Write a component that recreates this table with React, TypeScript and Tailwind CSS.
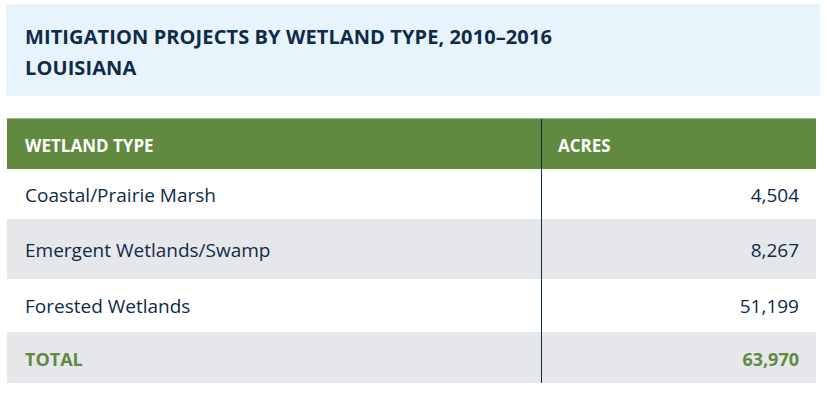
const rows = [
  { type: 'Coastal/Prairie Marsh', acres: '4,504', h: 'h-[50px]', bg: 'bg-white' },
  { type: 'Emergent Wetlands/Swamp', acres: '8,267', h: 'h-[60px]', bg: 'bg-[#e6e7eb]' },
  { type: 'Forested Wetlands', acres: '51,199', h: 'h-[53px]', bg: 'bg-white' },
];

export default function App() {
  return (
    <div className="w-[827px] h-[405px] bg-white pt-[4px] text-[#0e2b47] font-['Open_Sans',sans-serif]">
      {/* Title */}
      <div className="ml-[6px] w-[814px] h-[92px] bg-[#e8f4fc] pl-[19px] pt-[17px] font-bold text-[20px] leading-[31px] tracking-[0.1px]">
        <div>MITIGATION PROJECTS BY WETLAND TYPE, 2010–2016</div>
        <div>LOUISIANA</div>
      </div>

      {/* Table */}
      <div className="ml-[7px] mt-[22px] w-[809px]">
        <div className="flex h-[51px] bg-[#5f8a3f] border-t border-[#9db38c] text-white font-bold text-[17px]">
          <div className="w-[535px] flex items-center pl-[18px] pt-[3px] border-r border-[#0e2b47]">WETLAND TYPE</div>
          <div className="flex-1 flex items-center pl-[16px] pt-[3px]">ACRES</div>
        </div>
        {rows.map((r) => (
          <div key={r.type} className={`flex ${r.h} ${r.bg} text-[19px]`}>
            <div className="w-[535px] flex items-center pl-[18px] pt-[2px] border-r border-[#0e2b47]">{r.type}</div>
            <div className="flex-1 flex items-center justify-end pr-[17px] pt-[2px]">{r.acres}</div>
          </div>
        ))}
        <div className="flex h-[51px] bg-[#e6e7eb] text-[#5f8a3f] font-bold text-[18px]">
          <div className="w-[535px] flex items-center pl-[18px] pt-[3px] border-r border-[#0e2b47]">TOTAL</div>
          <div className="flex-1 flex items-center justify-end pr-[17px] pt-[3px]">63,970</div>
        </div>
      </div>
    </div>
  );
}
